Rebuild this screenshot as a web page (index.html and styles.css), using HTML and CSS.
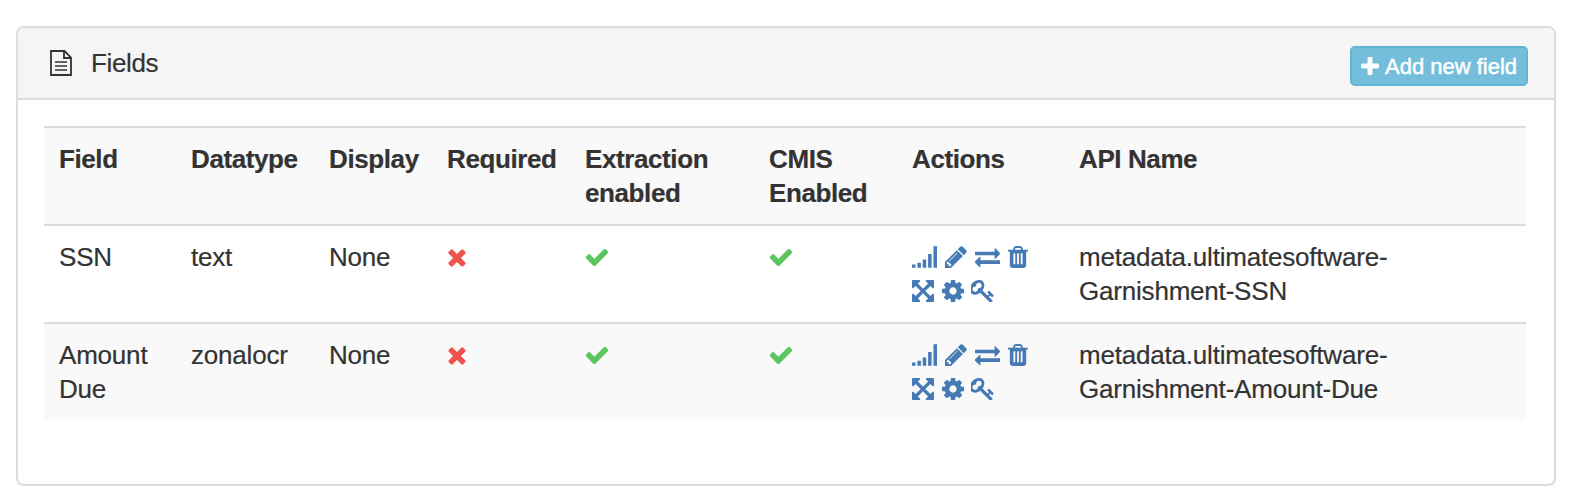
FILE: index.html
```
<!DOCTYPE html>
<html lang="en">
<head>
  <meta charset="UTF-8">
  <meta name="viewport" content="width=device-width, initial-scale=1.0">
  <title>Fields</title>
  <link rel="stylesheet" href="styles.css">
</head>
<body>
  <!-- shared icon shapes -->
  <svg class="sprite" aria-hidden="true">
    <symbol id="times" viewBox="0 0 1792 1792"><path d="M1490 1322q0 40-28 68l-136 136q-28 28-68 28t-68-28l-294-294-294 294q-28 28-68 28t-68-28l-136-136q-28-28-28-68t28-68l294-294-294-294q-28-28-28-68t28-68l136-136q28-28 68-28t68 28l294 294 294-294q28-28 68-28t68 28l136 136q28 28 28 68t-28 68l-294 294 294 294q28 28 28 68z"/></symbol>
    <symbol id="check" viewBox="0 0 1792 1792"><path d="M1671 566q0 40-28 68l-724 724-136 136q-28 28-68 28t-68-28l-136-136-362-362q-28-28-28-68t28-68l136-136q28-28 68-28t68 28l294 295 656-657q28-28 68-28t68 28l136 136q28 28 28 68z"/></symbol>
    <symbol id="signal" viewBox="0 0 25 22"><path d="M0 18.500h3.500v3.200H0zM5.400 16.700h3.500v5H5.400zM10.700 13.500h3.500v8.200h-3.500zM16.100 8h3.500v13.700h-3.500zM21.500.3H25v21.400h-3.500z"/></symbol>
    <symbol id="pencil" viewBox="128 128 1536 1536"><path d="M491 1536l91-91-235-235-91 91v107h128v128h107zm523-928q0-22-22-22-10 0-17 7l-542 542q-7 7-7 17 0 22 22 22 10 0 17-7l542-542q7-7 7-17zm-54-192l416 416-832 832h-416v-416zm683 96q0 53-37 90l-166 166-416-416 166-165q36-38 90-38 53 0 91 38l235 234q37 39 37 91z"/></symbol>
    <symbol id="exchange" viewBox="0 0 25 22"><path d="M0 5.700h19.600V2.500q.4-.6 1-.1l4.400 4.500q.3.600 0 1.200l-4.400 4.400q-.6.400-1-.1V9.300H0zM25 14.300H5.400v-3.200q-.4-.6-1-.1L0 15.500q-.3.600 0 1.200l4.400 4.400q.6.400 1-.1V18H25z"/></symbol>
    <symbol id="trash" viewBox="192 128 1408 1536"><path d="M704 1376v-704q0-14-9-23t-23-9h-64q-14 0-23 9t-9 23v704q0 14 9 23t23 9h64q14 0 23-9t9-23zm256 0v-704q0-14-9-23t-23-9h-64q-14 0-23 9t-9 23v704q0 14 9 23t23 9h64q14 0 23-9t9-23zm256 0v-704q0-14-9-23t-23-9h-64q-14 0-23 9t-9 23v704q0 14 9 23t23 9h64q14 0 23-9t9-23zm-544-992h448l-48-117q-7-9-17-11h-317q-10 2-17 11zm928 32v64q0 14-9 23t-23 9h-96v948q0 83-47 143.500t-113 60.500h-832q-66 0-113-58.500t-47-141.500v-952h-96q-14 0-23-9t-9-23v-64q0-14 9-23t23-9h309l70-167q15-37 54-63t79-26h320q40 0 79 26t54 63l70 167h309q14 0 23 9t9 23z"/></symbol>
    <symbol id="expand" viewBox="128 128 1536 1536"><path d="M1411 541l-355 355 355 355 144-144q29-31 70-14 39 17 39 59v448q0 26-19 45t-45 19h-448q-42 0-59-40-17-39 14-69l144-144-355-355-355 355 144 144q31 30 14 69-17 40-59 40h-448q-26 0-45-19t-19-45v-448q0-42 40-59 39-17 69 14l144 144 355-355-355-355-144 144q-19 19-45 19-12 0-24-5-40-17-40-59v-448q0-26 19-45t45-19h448q42 0 59 40 17 39-14 69l-144 144 355 355 355-355-144-144q-31-30-14-69 17-40 59-40h448q26 0 45 19t19 45v448q0 42-39 59-13 5-25 5-26 0-45-19z"/></symbol>
    <symbol id="cog" viewBox="128 128 1536 1536"><path d="M1152 896q0-106-75-181t-181-75-181 75-75 181 75 181 181 75 181-75 75-181zm512-109v222q0 12-8 23t-20 13l-185 28q-19 54-39 91 35 50 107 138 10 12 10 25t-9 23q-27 37-99 108t-94 71q-12 0-26-9l-138-108q-44 23-91 38-16 136-29 186-7 28-36 28h-222q-14 0-24.500-8.500t-11.500-21.500l-28-184q-49-16-90-37l-141 107q-10 9-25 9-14 0-25-11-126-114-165-168-7-10-7-23 0-12 8-23 15-21 51-66.500t54-70.500q-27-50-41-99l-183-27q-13-2-21-12.500t-8-23.500v-222q0-12 8-23t19-13l186-28q14-46 39-92-40-57-107-138-10-12-10-24 0-10 9-23 26-36 98.500-107.500t94.500-71.500q13 0 26 10l138 107q44-23 91-38 16-136 29-186 7-28 36-28h222q14 0 24.500 8.500t11.500 21.500l28 184q49 16 90 37l142-107q9-9 24-9 13 0 25 10 129 119 165 170 7 8 7 22 0 12-8 23-15 21-51 66.500t-54 70.500q26 50 41 98l183 28q13 2 21 12.500t8 23.500z"/></symbol>
    <symbol id="key" viewBox="96 128 1664 1536"><path d="M832 512q0-80-56-136t-136-56-136 56-56 136q0 42 19 83-41-19-83-19-80 0-136 56t-56 136 56 136 136 56 136-56 56-136q0-42-19-83 41 19 83 19 80 0 136-56t56-136zm851 704q0 17-49 66t-66 49q-9 0-28.500-16t-36.500-33-38.500-40-24.500-26l-96 96 220 220q28 28 28 68 0 42-39 81t-81 39q-40 0-68-28l-671-671q-176 131-365 131-163 0-265.500-102.500t-102.500-265.500q0-160 95-313t248-248 313-95q163 0 265.500 102.500t102.500 265.500q0 189-131 365l355 355 96-96q-3-3-26-24.500t-40-38.500-33-36.500-16-28.500q0-17 49-66t66-49q13 0 23 10 6 6 46 44.500t82 79.500 86.500 86 73 78 28.500 41z"/></symbol>
  </svg>

  <div class="panel">
    <div class="panel-heading">
      <h3 class="panel-title">
        <svg class="icon-file" viewBox="0 0 22 26" fill="none" stroke="currentColor"><path d="M1 1h13.500L21 7.500V25H1zM14 1v7h7" stroke-width="1.800"/><path d="M5 12h12M5 16h12M5 20h12" stroke-width="1.700"/></svg>
        Fields
      </h3>
      <button class="btn">
        <svg class="icon-plus" viewBox="192 128 1408 1408"><path d="M1600 736v192q0 40-28 68t-68 28h-416v416q0 40-28 68t-68 28h-192q-40 0-68-28t-28-68v-416h-416q-40 0-68-28t-28-68v-192q0-40 28-68t68-28h416v-416q0-40 28-68t68-28h192q40 0 68 28t28 68v416h416q40 0 68 28t28 68z"/></svg>
        Add new field
      </button>
    </div>
    <div class="panel-body">
      <table class="table">
        <colgroup>
          <col class="col-field"><col class="col-type"><col class="col-display"><col class="col-required">
          <col class="col-extraction"><col class="col-cmis"><col class="col-actions"><col>
        </colgroup>
        <thead>
          <tr>
            <th>Field</th>
            <th>Datatype</th>
            <th>Display</th>
            <th>Required</th>
            <th>Extraction enabled</th>
            <th>CMIS Enabled</th>
            <th>Actions</th>
            <th>API Name</th>
          </tr>
        </thead>
        <tbody>
          <tr>
            <td>SSN</td>
            <td>text</td>
            <td>None</td>
            <td><svg class="icon icon-no"><use href="#times"/></svg></td>
            <td><svg class="icon icon-yes"><use href="#check"/></svg></td>
            <td><svg class="icon icon-yes"><use href="#check"/></svg></td>
            <td>
              <div class="actions">
                <svg class="signal"><use href="#signal"/></svg>
                <svg class="pencil"><use href="#pencil"/></svg>
                <svg class="exchange"><use href="#exchange"/></svg>
                <svg class="trash"><use href="#trash"/></svg>
              </div>
              <div class="actions">
                <svg class="expand"><use href="#expand"/></svg>
                <svg class="cog"><use href="#cog"/></svg>
                <svg class="key"><use href="#key"/></svg>
              </div>
            </td>
            <td>metadata.ultimatesoftware-<br>Garnishment-SSN</td>
          </tr>
          <tr>
            <td>Amount Due</td>
            <td>zonalocr</td>
            <td>None</td>
            <td><svg class="icon icon-no"><use href="#times"/></svg></td>
            <td><svg class="icon icon-yes"><use href="#check"/></svg></td>
            <td><svg class="icon icon-yes"><use href="#check"/></svg></td>
            <td>
              <div class="actions">
                <svg class="signal"><use href="#signal"/></svg>
                <svg class="pencil"><use href="#pencil"/></svg>
                <svg class="exchange"><use href="#exchange"/></svg>
                <svg class="trash"><use href="#trash"/></svg>
              </div>
              <div class="actions">
                <svg class="expand"><use href="#expand"/></svg>
                <svg class="cog"><use href="#cog"/></svg>
                <svg class="key"><use href="#key"/></svg>
              </div>
            </td>
            <td>metadata.ultimatesoftware-<br>Garnishment-Amount-Due</td>
          </tr>
        </tbody>
      </table>
    </div>
  </div>
</body>
</html>
```
FILE: styles.css
```
* {
  box-sizing: border-box;
}
body {
  margin: 0;
  padding: 26px 20px 0 16px;
  background: #fff;
  color: #333;
  font-family: "Liberation Sans", Arial, sans-serif;
  font-size: 26px;
  line-height: 34px;
  letter-spacing: -0.2px;
  -webkit-text-stroke: 0.2px;
}
.sprite {
  display: none;
}
.panel {
  height: 460px;
  border: 2px solid #ddd;
  border-radius: 8px;
  box-shadow: 0 2px 2px rgba(0, 0, 0, 0.05);
}
.panel-heading {
  display: flex;
  justify-content: space-between;
  height: 72px;
  padding: 18px 26px 0 32px;
  background: #f5f5f5;
  border-bottom: 2px solid #ddd;
  border-radius: 6px 6px 0 0;
}
.panel-title {
  display: flex;
  align-items: center;
  gap: 19px;
  height: 34px;
  margin: 0;
  font-size: 26px;
  font-weight: normal;
  letter-spacing: -0.35px;
}
.icon-file {
  width: 22px;
  height: 26px;
}
.btn {
  display: flex;
  align-items: center;
  gap: 6px;
  width: 178px;
  height: 40px;
  padding: 1px 0 0 9px;
  border: 2px solid #63b5d6;
  border-radius: 5px;
  background: #74bddb;
  color: #fff;
  font: 22px "Liberation Sans", Arial, sans-serif;
  white-space: nowrap;
  -webkit-text-stroke: 0.5px;
}
.icon-plus {
  width: 18px;
  height: 18px;
  margin-top: -2px;
  fill: currentColor;
}
.panel-body {
  padding: 26px 28px 0 26px;
}
.table {
  width: 1482px;
  table-layout: fixed;
  border-spacing: 0;
}
th,
td {
  height: 98px;
  padding: 14px 15px;
  border-top: 2px solid #ddd;
  text-align: left;
  vertical-align: top;
}
th {
  letter-spacing: -0.4px;
}
thead tr,
tbody tr:nth-child(even) {
  background: #f9f9f9;
}
.col-field { width: 132px; }
.col-type { width: 138px; }
.col-display { width: 118px; }
.col-required { width: 138px; }
.col-extraction { width: 184px; }
.col-cmis { width: 143px; }
.col-actions { width: 167px; }
.icon {
  display: block;
  width: 26px;
  height: 26px;
  margin-top: 4px;
  fill: currentColor;
}
.icon-no {
  margin-left: -3px;
  color: #ef5350;
}
.icon-yes {
  margin-left: -1px;
  color: #5cc560;
}
.actions {
  display: flex;
  gap: 8px;
  height: 34px;
  padding-top: 6px;
  color: #457ab5;
}
.actions svg {
  width: 22px;
  height: 22px;
  fill: currentColor;
}
.actions .signal,
.actions .exchange {
  width: 25px;
}
.actions .trash {
  width: 20px;
}
.actions .key {
  width: 24px;
  margin-left: -1px;
}
```
